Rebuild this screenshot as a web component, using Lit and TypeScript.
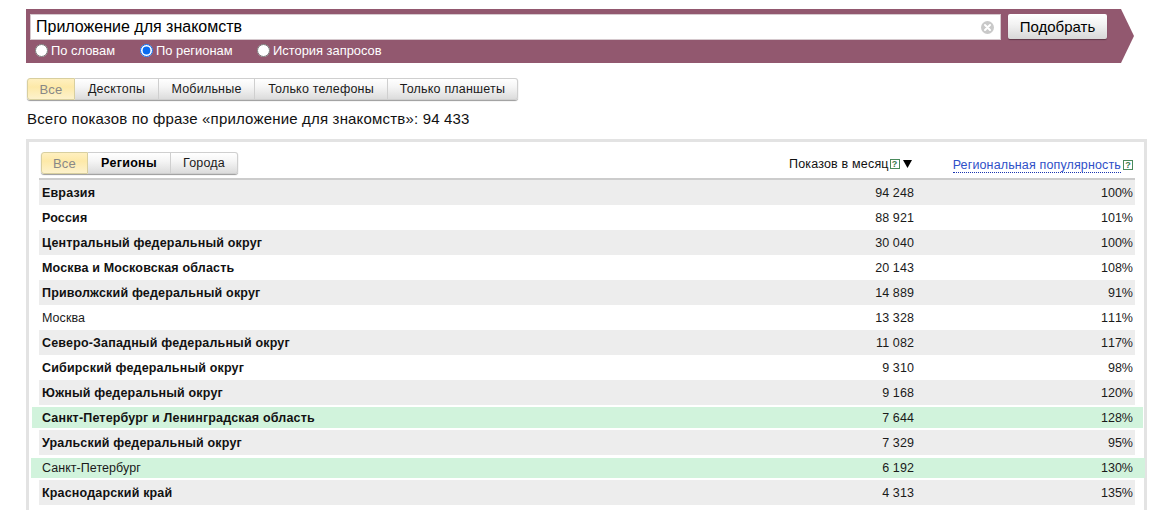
import { LitElement, html, css, svg } from "lit";
import { customElement } from "lit/decorators.js";

type Row = { name: string; shows: string; pct: string; bold?: boolean; stripe?: boolean; green?: "a" | "b" };

const rows: Row[] = [
  { name: "Евразия", shows: "94 248", pct: "100%", bold: true, stripe: true },
  { name: "Россия", shows: "88 921", pct: "101%", bold: true },
  { name: "Центральный федеральный округ", shows: "30 040", pct: "100%", bold: true, stripe: true },
  { name: "Москва и Московская область", shows: "20 143", pct: "108%", bold: true },
  { name: "Приволжский федеральный округ", shows: "14 889", pct: "91%", bold: true, stripe: true },
  { name: "Москва", shows: "13 328", pct: "111%" },
  { name: "Северо-Западный федеральный округ", shows: "11 082", pct: "117%", bold: true, stripe: true },
  { name: "Сибирский федеральный округ", shows: "9 310", pct: "98%", bold: true },
  { name: "Южный федеральный округ", shows: "9 168", pct: "120%", bold: true, stripe: true },
  { name: "Санкт-Петербург и Ленинградская область", shows: "7 644", pct: "128%", bold: true, green: "a" },
  { name: "Уральский федеральный округ", shows: "7 329", pct: "95%", bold: true, stripe: true },
  { name: "Санкт-Петербург", shows: "6 192", pct: "130%", green: "b" },
  { name: "Краснодарский край", shows: "4 313", pct: "135%", bold: true, stripe: true },
];

@customElement("app-root")
export class AppRoot extends LitElement {
  static styles = css`
    :host {
      display: block;
      height: 510px;
      overflow: hidden;
      background: #fff;
      color: #000;
      font: 13px/15px "Liberation Sans", Arial, sans-serif;
      padding-top: 9px;
      box-sizing: border-box;
    }
    .banner {
      margin-left: 26px;
      width: 1108px;
      height: 54px;
      box-sizing: border-box;
      padding: 5px 0 0 4px;
      background: #92586f;
      clip-path: polygon(0 0, 1095px 0, 100% 50%, 1095px 100%, 0 100%);
    }
    .search { display: flex; gap: 7px; align-items: flex-start; }
    .input {
      width: 971px;
      height: 26px;
      box-sizing: border-box;
      display: flex;
      align-items: center;
      justify-content: space-between;
      padding: 0 6px 2px 5px;
      background: #fff;
      border: 1px solid #d5c8cd;
      font-size: 16px;
    }
    .clear { display: block; width: 13px; height: 13px; margin-top: 2px; }
    .go {
      width: 99px;
      height: 25px;
      box-sizing: border-box;
      display: flex;
      align-items: center;
      justify-content: center;
      font-size: 15px;
      border-radius: 2px;
      background: linear-gradient(#fff, #f3f3f3 40%, #d8d8d8);
      box-shadow: 0 1px 1px rgba(0, 0, 0, 0.35);
    }
    .radios { display: flex; margin-top: 1px; color: #fff; height: 18px; align-items: center; padding-left: 5px; font-size: 12.9px; }
    .radio { display: flex; align-items: center; gap: 3px; }
    .radio input { margin: 1px 0 0; width: 13px; height: 13px; accent-color: #0a6cf0; }
    .r1 { width: 105px; }
    .r2 { width: 117px; }
    .tabs { display: inline-flex; height: 22px; box-sizing: border-box; vertical-align: top; border-radius: 3px; box-shadow: 0 1px 1px rgba(0,0,0,.4); }
    .tab {
      display: flex;
      align-items: center;
      justify-content: center;
      box-sizing: border-box;
      height: 22px;
      font-size: 12.5px;
      letter-spacing: 0.2px;
      color: #1a1a1a;
      background: linear-gradient(#fff, #f5f5f5 40%, #dcdcdc);
      border: 1px solid #cfcfcf;
      border-left: 0;
    }
    .tab:first-child { border-left: 1px solid #d8cfa8; border-radius: 3px 0 0 3px; }
    .tab:last-child { border-radius: 0 3px 3px 0; }
    .tab.on { background: linear-gradient(#fff0c0, #fde9a8 40%, #fdf2cc); color: #888; border-color: #d8cf9f; font-size: 13px; padding-top: 1px; }
    .top-tabs { margin: 15px 0 0 27px; }
    .t1 { width: 48px; } .t2 { width: 84px; } .t3 { width: 96px; } .t4 { width: 133px; } .t5 { width: 130px; }
    .total { margin: 10px 0 0 27px; font-size: 15px; line-height: 17px; letter-spacing: 0.18px; color: #111; }
    .card {
      margin: 12px 0 0 26px;
      width: 1121px;
      box-sizing: border-box;
      border: 3px solid #e3e3e3;
      border-bottom: 0;
      padding: 10px 9px 0 10px;
      height: 400px;
    }
    .head { display: flex; height: 26px; border-bottom: 2px solid #ccc; align-items: flex-start; }
    .in-tabs { margin-left: 2px; }
    .i1 { width: 47px; } .i2 { width: 83px; font-weight: bold; letter-spacing: 0.3px; color: #000; } .i3 { width: 67px; }
    .h-shows, .h-pct { display: flex; align-items: center; height: 22px; margin-top: 1px; white-space: nowrap; }
    .h-shows { margin-left: auto; font-size: 12.5px; letter-spacing: 0.18px; color: #111; }
    .h-pct { margin-left: 41px; margin-right: 2px; font-size: 12.5px; letter-spacing: 0.14px; margin-top: 2px; }
    .link { color: #2f50c8; border-bottom: 1px dotted #1a35b0; line-height: 14px; }
    .help {
      display: inline-flex; align-items: center; justify-content: center;
      width: 10px; height: 10px; box-sizing: border-box; margin-left: 1px;
      border: 1px solid #4a8a5c; color: #3c7a4e; font-size: 9px; line-height: 8px; font-weight: bold;
    }
    .h-pct .help { margin-left: 2px; margin-top: -1px; }
    .arrow { display: block; width: 9px; height: 8px; margin-left: 3px; }
    .row { display: flex; height: 25px; align-items: center; box-sizing: border-box; padding: 1px 2px 0 3px; font-size: 12.5px; color: #1a1a1a; }
    .row.stripe { background: #ededed; }
    .row.bold .name { font-weight: bold; color: #111; letter-spacing: 0.17px; }
    .name { flex: 1; letter-spacing: 0.05px; }
    .shows { width: 100px; text-align: right; margin-right: 159px; letter-spacing: 0.1px; }
    .pct { width: 60px; text-align: right; font-kerning: none; }
    .row.green { background: #d1f3dc; }
    .row.a { height: 21px; margin: 2px -8px 2px -7px; padding: 1px 10px 0 10px; }
    .row.b { height: 20px; margin: 3px -10px 2px -8px; padding: 0 12px 0 11px; }
  `;

  private help() {
    return html`<span class="help">?</span>`;
  }

  render() {
    return html`
      <div class="banner">
        <div class="search">
          <div class="input">
            <span>Приложение для знакомств</span>
            <svg class="clear" viewBox="0 0 13 13">
              ${svg`<circle cx="6.5" cy="6.5" r="6.5" fill="#c9c9c9"></circle>
              <path d="M4 4l5 5M9 4l-5 5" stroke="#fff" stroke-width="2" stroke-linecap="round"></path>`}
            </svg>
          </div>
          <div class="go">Подобрать</div>
        </div>
        <div class="radios">
          <label class="radio r1"><input type="radio" name="m" />По словам</label>
          <label class="radio r2"><input type="radio" name="m" checked />По регионам</label>
          <label class="radio"><input type="radio" name="m" />История запросов</label>
        </div>
      </div>
      <div class="top-tabs tabs">
        <div class="tab on t1">Все</div>
        <div class="tab t2">Десктопы</div>
        <div class="tab t3">Мобильные</div>
        <div class="tab t4">Только телефоны</div>
        <div class="tab t5">Только планшеты</div>
      </div>
      <div class="total">Всего показов по фразе «приложение для знакомств»: 94 433</div>
      <div class="card">
        <div class="head">
          <div class="tabs in-tabs">
            <div class="tab on i1">Все</div>
            <div class="tab i2">Регионы</div>
            <div class="tab i3">Города</div>
          </div>
          <div class="h-shows">Показов в месяц${this.help()}
            <svg class="arrow" viewBox="0 0 9 8">${svg`<path d="M0 0h9L4.5 8z" fill="#000"></path>`}</svg>
          </div>
          <div class="h-pct"><span class="link">Региональная популярность</span>${this.help()}</div>
        </div>
        ${rows.map(
          (r) => html`<div class="row ${r.stripe ? "stripe" : ""} ${r.bold ? "bold" : ""} ${r.green ? "green " + r.green : ""}">
            <span class="name">${r.name}</span>
            <span class="shows">${r.shows}</span>
            <span class="pct">${r.pct}</span>
          </div>`
        )}
      </div>
    `;
  }
}
